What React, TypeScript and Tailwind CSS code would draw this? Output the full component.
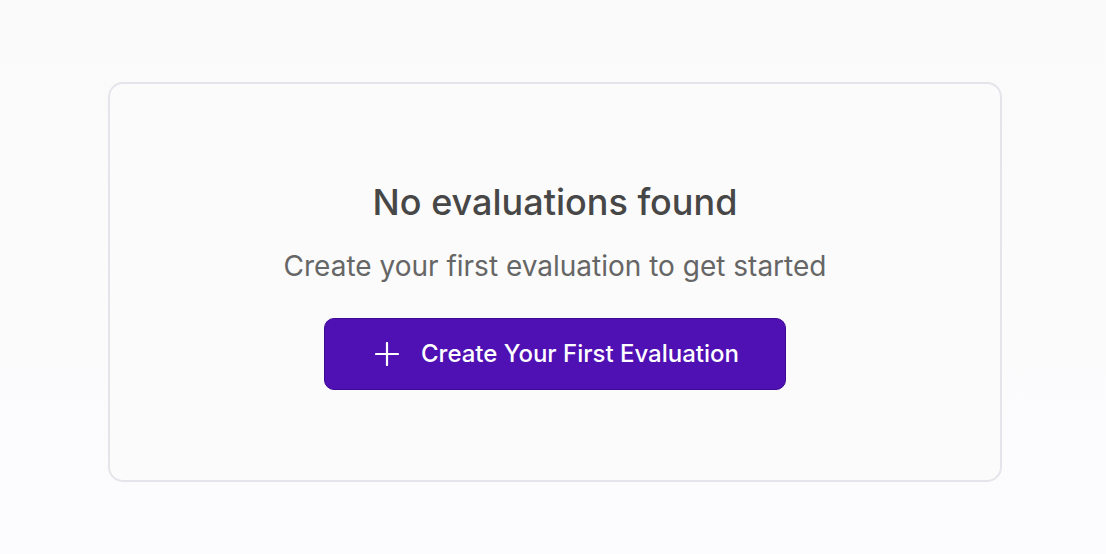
import React from "react";

export default function App() {
  return (
    <div
      className="min-h-[554px] w-full bg-gradient-to-b from-[#fafafa] to-[#fcfcfe] flex justify-start pl-[108px] pt-[82px]"
      style={{ fontFamily: "Inter, 'Noto Sans', sans-serif" }}
    >
      <div className="w-[894px] h-[400px] rounded-[15px] border-2 border-[#e3e5ea] bg-[#fbfbfb] flex flex-col items-center pt-[96px]">
        <h2 className="text-[36px] leading-[44px] font-medium text-[#474747]">
          No evaluations found
        </h2>
        <p className="mt-[25px] text-[28px] leading-[34px] text-[#666666]">
          Create your first evaluation to get started
        </p>
        <button className="mt-[35px] w-[462px] h-[72px] rounded-[10px] bg-[#4f10b4] border border-[#3d0a96] flex items-center justify-center pl-[4px] gap-[22px] text-white text-[24px] font-medium">
          <svg width="24" height="24" viewBox="0 0 24 24" fill="none" stroke="white" strokeWidth="2.2" strokeLinecap="round">
            <path d="M12 1v22M1 12h22" />
          </svg>
          <span>Create Your First Evaluation</span>
        </button>
      </div>
    </div>
  );
}
